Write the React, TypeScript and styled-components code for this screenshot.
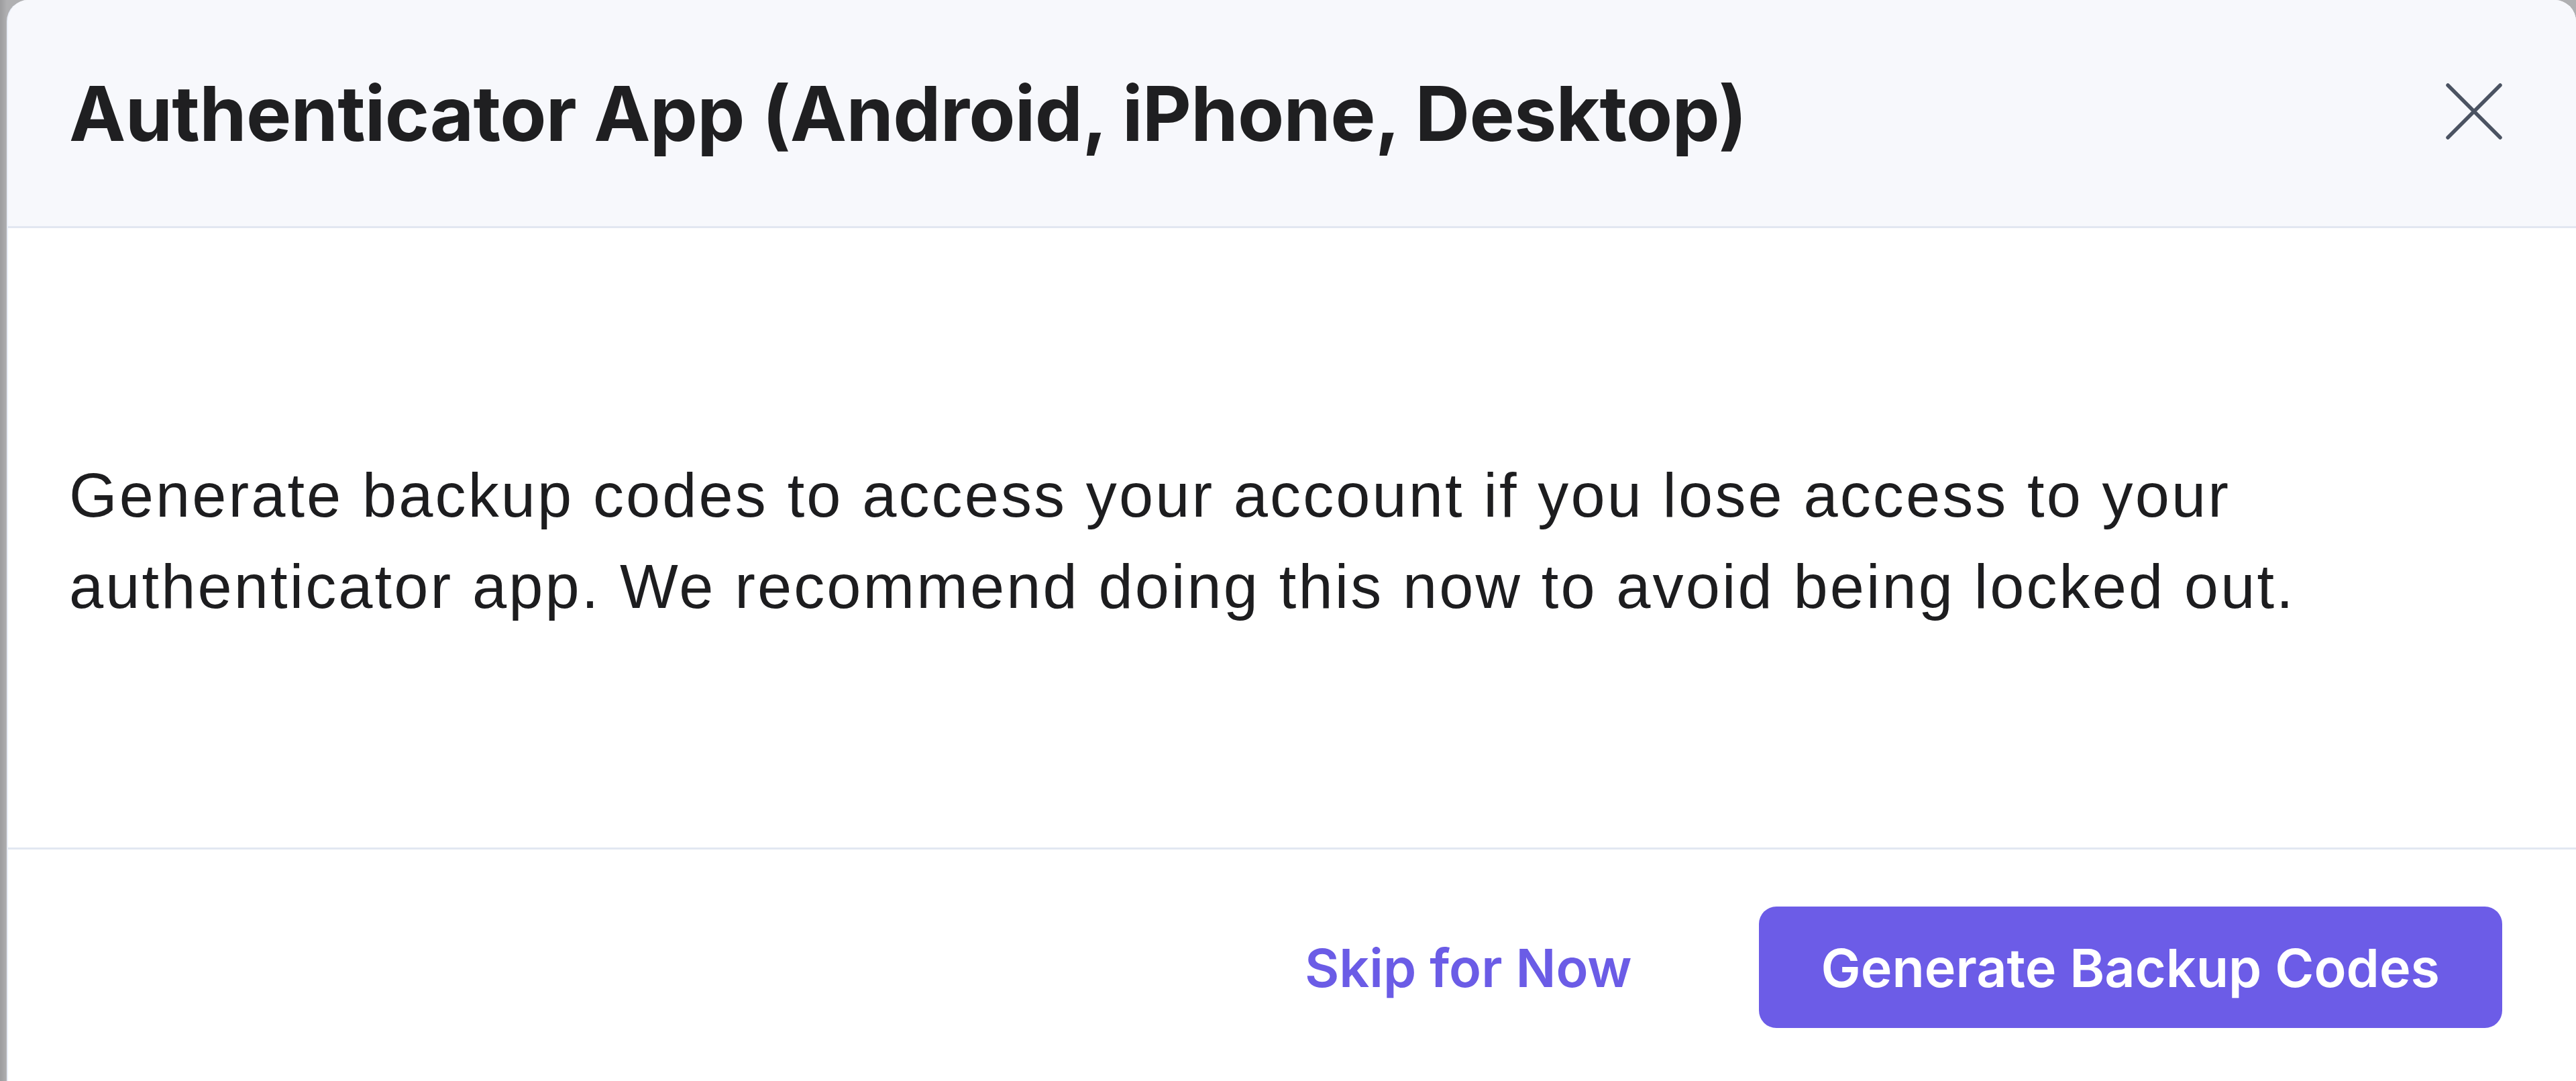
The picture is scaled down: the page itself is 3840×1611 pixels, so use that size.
import React from "react";
import styled, { createGlobalStyle } from "styled-components";

const GlobalStyle = createGlobalStyle`
  html, body {
    margin: 0;
    padding: 0;
    overflow: hidden;
    background: #a4a4a6;
  }
  * {
    box-sizing: border-box;
  }
`;

const Backdrop = styled.div`
  display: flex;
  width: 3840px;
  height: 1611px;
  padding-left: 10px;
  background: linear-gradient(90deg, #9c9c9e 0, #b0b0b2 10px);
`;

const Dialog = styled.div`
  display: flex;
  flex-direction: column;
  width: 3830px;
  height: 1620px;
  background: #ffffff;
  border-left: 2px solid #e9eef8;
  border-radius: 32px 32px 0 0;
  overflow: hidden;
`;

const Header = styled.header`
  display: flex;
  align-items: center;
  justify-content: space-between;
  height: 340px;
  padding: 0 110px 0 91px;
  background: #f7f8fc;
  border-bottom: 3px solid #e2e7f1;
`;

const Title = styled.h2`
  margin: 0;
  font-family: Inter, "Noto Sans", sans-serif;
  font-weight: 700;
  font-size: 113px;
  letter-spacing: -0.7px;
  color: #1f1f21;
`;

const CloseButton = styled.button`
  display: flex;
  align-items: center;
  justify-content: center;
  width: 84px;
  height: 84px;
  padding: 0;
  border: none;
  background: transparent;
  color: #4b5362;
  cursor: pointer;
  margin-top: -6px;
`;

const Content = styled.div`
  display: flex;
  flex: 0 0 923px;
  align-items: center;
  padding: 8px 110px 0 91px;
`;

const Message = styled.p`
  margin: 0;
  font-family: "Liberation Sans", Arial, sans-serif;
  font-size: 92px;
  line-height: 136px;
  letter-spacing: 3.1px;
  color: #1d1d1f;
`;

const Footer = styled.footer`
  display: flex;
  align-items: center;
  justify-content: flex-end;
  gap: 189px;
  padding: 85px 110px 88px 91px;
  border-top: 3px solid #e2e7f1;
`;

interface IAction {
  primary?: boolean;
}
const Action = styled.button<IAction>`
  display: flex;
  align-items: center;
  justify-content: center;
  height: 181px;
  padding: ${(props) => (props.primary ? "0 93px" : "0")};
  border: none;
  border-radius: 26px;
  background: ${(props) => (props.primary ? "#6c5ce7" : "transparent")};
  color: ${(props) => (props.primary ? "#ffffff" : "#6b5ce6")};
  font-family: Inter, "Noto Sans", sans-serif;
  font-weight: 600;
  font-size: 79px;
  cursor: pointer;
`;

function CloseIcon() {
  return (
    <svg width="84" height="84" viewBox="0 0 84 84" fill="none">
      <path
        d="M3 3L81 81M81 3L3 81"
        stroke="currentColor"
        strokeWidth="5.5"
        strokeLinecap="round"
      />
    </svg>
  );
}

export default function App() {
  return (
    <>
      <GlobalStyle />
      <Backdrop>
        <Dialog role="dialog">
          <Header>
            <Title>Authenticator App (Android, iPhone, Desktop)</Title>
            <CloseButton aria-label="Close">
              <CloseIcon />
            </CloseButton>
          </Header>
          <Content>
            <Message>
              Generate backup codes to access your account if you lose access to your
              authenticator app. We recommend doing this now to avoid being locked out.
            </Message>
          </Content>
          <Footer>
            <Action>Skip for Now</Action>
            <Action primary>Generate Backup Codes</Action>
          </Footer>
        </Dialog>
      </Backdrop>
    </>
  );
}
